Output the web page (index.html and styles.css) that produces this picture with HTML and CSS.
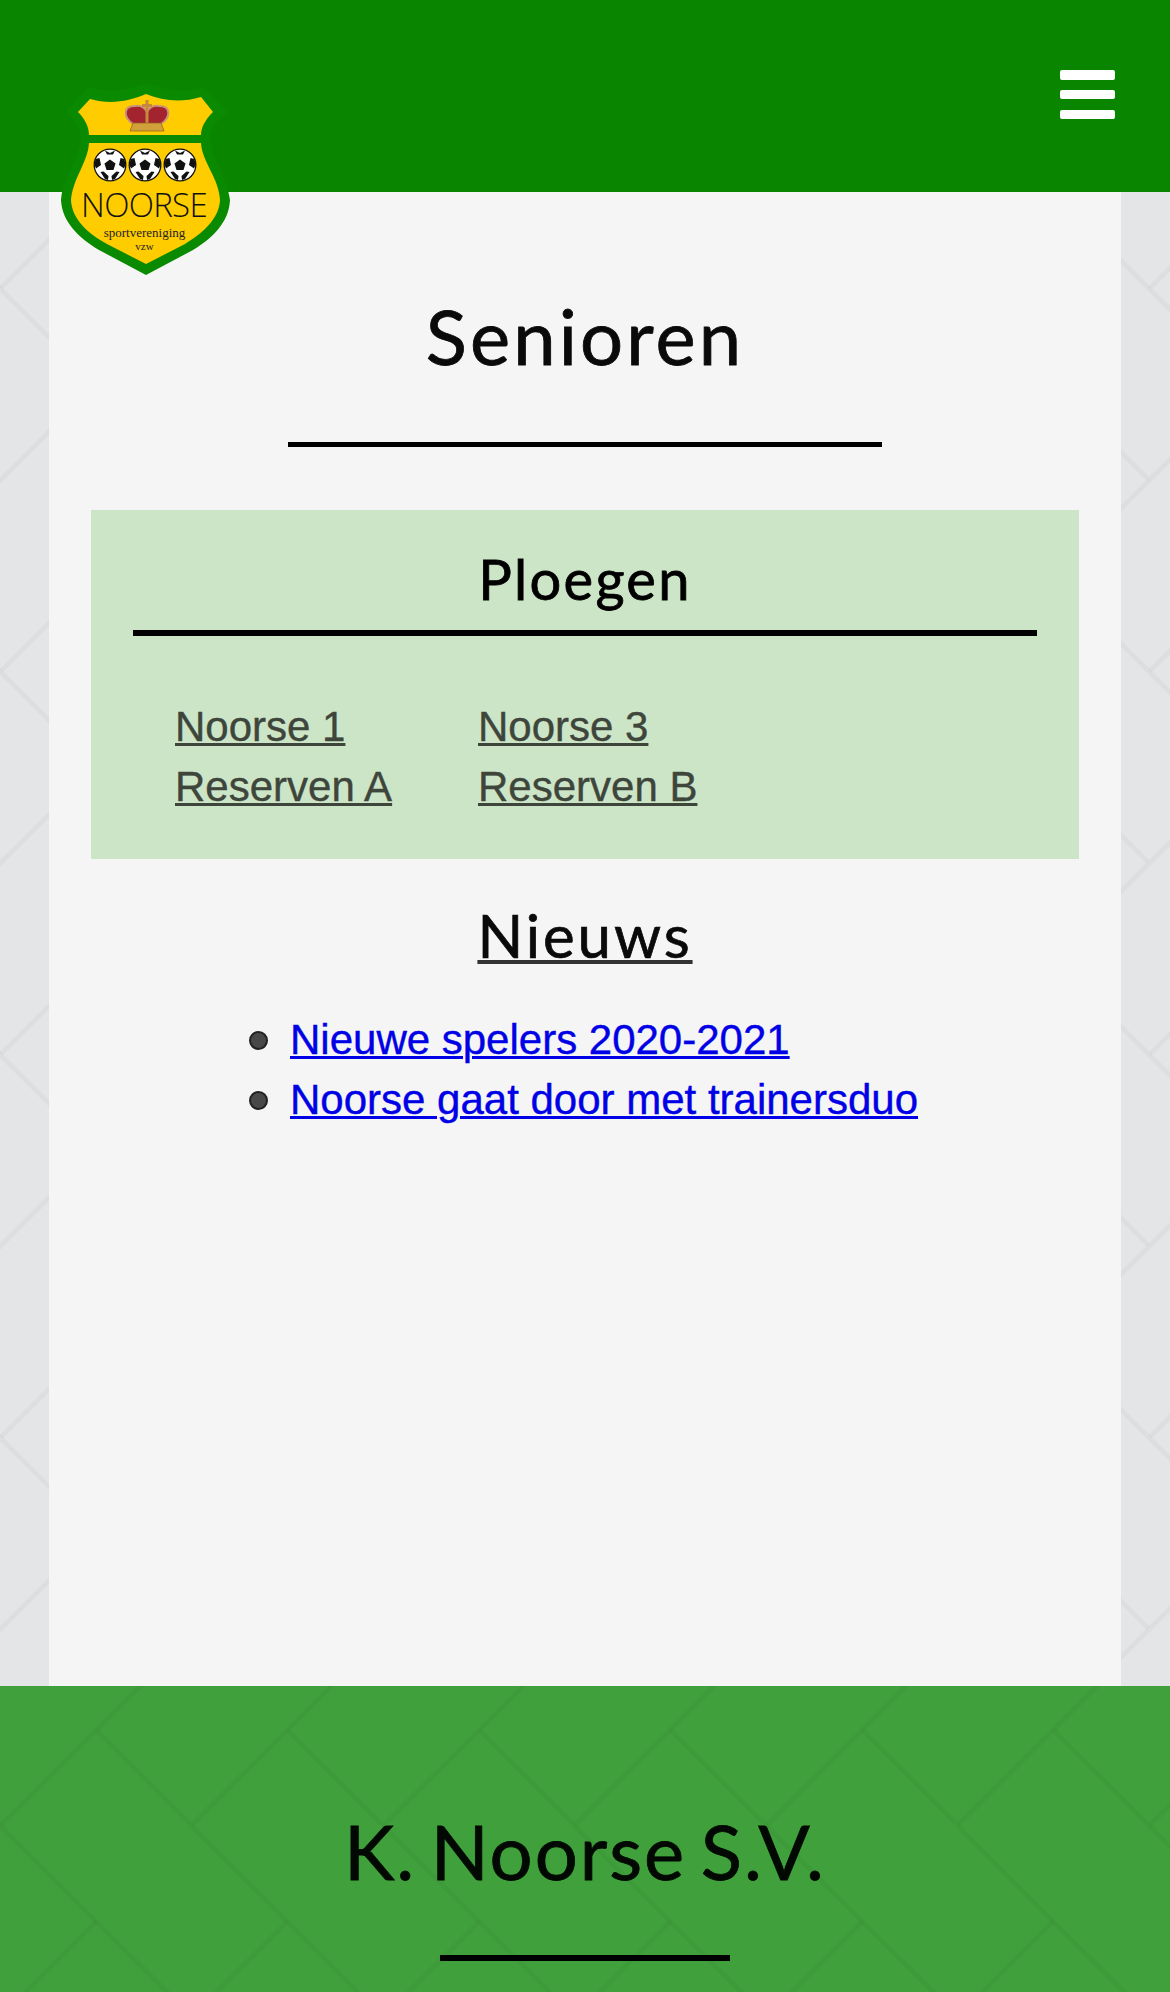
FILE: index.html
```html
<!DOCTYPE html>
<html lang="nl">
<head>
<meta charset="utf-8">
<title>Senioren - K. Noorse S.V.</title>
<link rel="stylesheet" href="styles.css">
</head>
<body>
<header class="topbar">
  <a class="logo" href="#" aria-label="Noorse sportvereniging vzw">
    <svg viewBox="0 0 170 190" width="170" height="190">
      <defs>
        <g id="ball">
          <circle r="15.8" fill="#fff" stroke="#111" stroke-width="1.3"/>
          <path d="M0-5.5 5.5-1.5 3.5 5H-3.5L-5.5-1.5Z" fill="#111"/>
          <path d="M-5-14.5 0-12 5-14.5 3-10.5H-3Z" fill="#111"/>
          <path d="M14.5-6 10.5-7 9 0 14 3.5 15.5 0Z" fill="#111"/>
          <path d="M-14.5-6-10.5-7-9 0-14 3.5-15.5 0Z" fill="#111"/>
          <path d="M5 14 9.5 7 6.5 6.5 1.5 11 2 15Z" fill="#111"/>
          <path d="M-5 14-9.5 7-6.5 6.5-1.5 11-2 15Z" fill="#111"/>
        </g>
      </defs>
      <path d="M85-3C70 3 50 8 27 1L5 26C14 34 20 42 20 52 19 72 2 90 0 114 1 136 18 152 38 164L85 189 132 164C152 152 168 136 169 114 166 90 150 72 149 52 149 42 158 34 167 26L143 1C120 8 100 3 85-3Z" fill="#0a8a00"/>
      <path d="M29 13C50 19 68 15 85 8 102 15 120 17 140 11L152 26C146 32 140 40 140 49H28C28 40 23 32 17 26Z" fill="#ffcc00"/>
      <path d="M28 57H140C141 76 158 92 159 114 158 134 140 148 124 158L85 178 46 158C28 148 11 134 10 114 12 92 27 76 28 57Z" fill="#ffcc00"/>
      <path d="M72 38C62 31 62 20 74 20 80 19 84 22 86 26 88 22 92 19 98 20 110 20 110 31 100 38Z" fill="#a3242e" stroke="#c9907a" stroke-width="2"/>
      <path d="M84.5 14H87.5V18H91V21H87.5V39H84.5V21H81V18H84.5Z" fill="#c8873f"/>
      <path d="M72 37H100L103 45H69Z" fill="#d2a03a" stroke="#8f5f1c" stroke-width=".7"/>
      <use href="#ball" x="49" y="79"/>
      <use href="#ball" x="84" y="79"/>
      <use href="#ball" x="119" y="79"/>
      <text x="83" y="131" class="logo-name">NOORSE</text>
      <text x="83.5" y="151" class="logo-sub">sportvereniging</text>
      <text x="83.5" y="164" class="logo-sub logo-sub-small">vzw</text>
    </svg>
  </a>
  <button class="menu" aria-label="Menu"><span></span><span></span><span></span></button>
</header>
<div class="backdrop">
  <main class="sheet">
    <h1 class="page-title">Senioren</h1>
    <section class="teams">
      <h2 class="teams-title">Ploegen</h2>
      <div class="team-grid">
        <a href="#">Noorse 1</a>
        <a href="#">Noorse 3</a>
        <a href="#">Reserven A</a>
        <a href="#">Reserven B</a>
      </div>
    </section>
    <h2 class="news-title"><a href="#">Nieuws</a></h2>
    <ul class="news">
      <li><a href="#">Nieuwe spelers 2020-2021</a></li>
      <li><a href="#">Noorse gaat door met trainersduo</a></li>
    </ul>
  </main>
</div>
<footer class="footer">
  <h2 class="footer-title">K. Noorse S.V.</h2>
  <div class="footer-rule"></div>
</footer>
</body>
</html>
```
FILE: styles.css
```css
:root {
  --lattice: url("data:image/svg+xml,%3Csvg xmlns='http://www.w3.org/2000/svg' width='191.5' height='383' fill='none' stroke='%23000' stroke-opacity='.033' stroke-width='4.5'%3E%3Cpath d='M150-10 1 139'/%3E%3Cpath d='M341.5-10 192.5 139'/%3E%3Cpath d='M96.5 235-61.5 393'/%3E%3Cpath d='M288 235 130 393'/%3E%3Cpath d='M96 44 382 330'/%3E%3Cpath d='M-95.5 44 190.5 330'/%3E%3C/svg%3E");
}
* { box-sizing: border-box; }
html, body { margin: 0; }
body { height: 1992px; overflow: hidden; font-family: "Liberation Sans", Arial, sans-serif; background: #e4e5e7; }

.topbar { height: 192px; background: #0a8500; position: relative; display: flex; justify-content: flex-end; }
.logo { position: absolute; left: 61px; top: 86px; z-index: 2; display: block; }
.logo svg { display: block; overflow: visible; }
.logo-name { font-family: "Open Sans", sans-serif; font-size: 33px; font-weight: 300; letter-spacing: -.7px; text-anchor: middle; fill: #111; }
.logo-sub { font-family: "Liberation Serif", serif; font-size: 13px; text-anchor: middle; fill: #222; }
.logo-sub-small { font-size: 11px; }

.menu { width: 55px; height: 49px; margin: 70px 55px 0 0; padding: 0; border: 0; background: none; display: flex; flex-direction: column; justify-content: space-between; }
.menu span { display: block; height: 9.5px; border-radius: 2px; background: #fff; }

.backdrop { height: 1494px; padding: 0 49px; background-color: #e4e5e7; background-image: var(--lattice); background-position: 0 -43.5px; }
.sheet { height: 100%; background: #f5f5f5; padding: 0 42px; display: flow-root; }

.page-title { width: 594px; margin: 101px auto 63px; padding-bottom: 64px; border-bottom: 5px solid #000; font: 400 76px/85px Lato, sans-serif; letter-spacing: 3.1px; text-align: center; color: #0a0a0a; -webkit-text-stroke: .8px #0a0a0a; }

.teams { height: 349px; background: #cde5c7; padding: 36px 42px 0; }
.teams-title { margin: 0; padding-bottom: 18px; border-bottom: 6px solid #000; font: 400 56px/66px Lato, sans-serif; letter-spacing: 2.3px; text-align: center; color: #000; -webkit-text-stroke: .8px #000; }
.team-grid { margin: 61px 0 0 42px; display: grid; grid-template-columns: 303px 1fr; }
.team-grid a { font-size: 42px; line-height: 60px; color: #3e463c; -webkit-text-stroke: .4px #3e463c; text-decoration-thickness: 3px; }

.news-title { margin: 40px 0 0; font: 400 60px/72px Lato, sans-serif; letter-spacing: 2.9px; text-align: center; -webkit-text-stroke: .7px #0a0a0a; }
.news-title a { color: #0a0a0a; text-decoration-color: #333; text-decoration-thickness: 4px; }

.news { margin: 39px 0 0; padding: 0 0 0 158px; list-style: none; font-size: 42px; line-height: 60px; }
.news li { display: flex; align-items: center; gap: 22px; }
.news li::before { content: ""; flex: none; width: 15px; height: 15px; border: 2px solid #222; border-radius: 50%; background: #484848; }
.news a { color: #0000e6; -webkit-text-stroke: .4px #0000e6; text-decoration-thickness: 3px; }

.footer { height: 306px; padding-top: 120px; background-color: #40a03c; background-image: var(--lattice); }
.footer-title { margin: 0; font: 400 76px/90px Lato, sans-serif; letter-spacing: 2px; word-spacing: -7px; text-align: center; color: #020802; -webkit-text-stroke: .8px #020802; }
.footer-rule { width: 290px; height: 6px; margin: 59px auto 0; background: #000; }
```
